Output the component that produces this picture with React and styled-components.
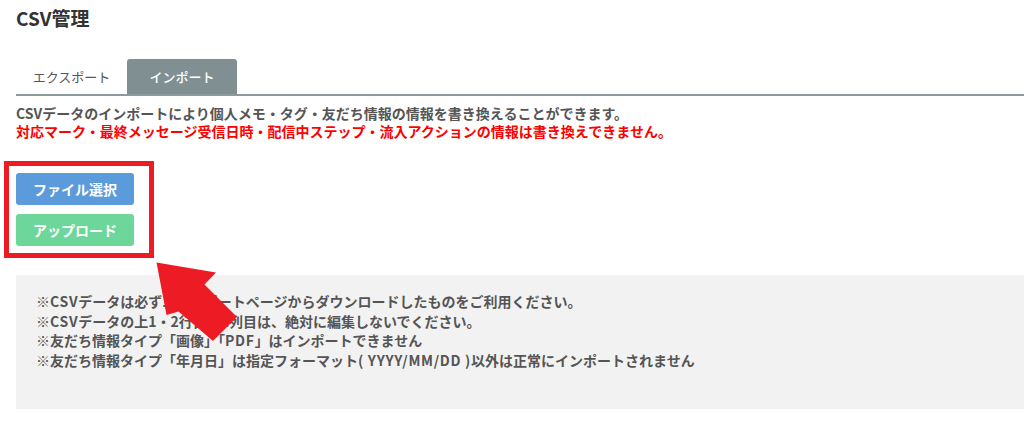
import React from "react";
import styled, { createGlobalStyle } from "styled-components";

const Global = createGlobalStyle`
  html, body { margin: 0; padding: 0; background: #fff; }
  body {
    font-family: "Noto Sans CJK JP", "Noto Sans", sans-serif;
    width: 1024px;
    height: 427px;
    overflow: hidden;
  }
`;

const Page = styled.div`
  position: relative;
  padding: 7px 0 0 16px;
`;

const Title = styled.h1`
  margin: 0;
  font-size: 19px;
  line-height: 22px;
  font-weight: 700;
  color: #333;
`;

const Tabs = styled.div`
  display: flex;
  margin-top: 30px;
  border-bottom: 2px solid #8a9a9d;
`;

const Tab = styled.div`
  width: ${(p) => p.$w}px;
  height: 35px;
  display: flex;
  align-items: center;
  justify-content: center;
  font-size: 13px;
  font-weight: ${(p) => (p.$active ? 500 : 400)};
  color: ${(p) => (p.$active ? "#fff" : "#555")};
  background: ${(p) => (p.$active ? "#7f8f92" : "transparent")};
  border-radius: 3px 3px 0 0;
`;

const Desc = styled.div`
  padding-top: 9px;
  font-size: 14px;
  line-height: 17.5px;
  font-weight: 700;
  white-space: nowrap;
`;

const DescLine = styled.div`
  color: ${(p) => (p.$red ? "#ff0000" : "#555")};
`;

const Highlight = styled.div`
  margin: 21px 0 0 -12px;
  width: 133px;
  border: 5px solid #ed1c24;
  padding: 7px 0 7px 7px;
  display: flex;
  flex-direction: column;
  gap: 9px;
`;

const Button = styled.div`
  width: 118px;
  height: 32px;
  border-radius: 3px;
  background: ${(p) => p.$bg};
  color: #fff;
  font-size: 14px;
  font-weight: 700;
  display: flex;
  align-items: center;
  justify-content: center;
`;

const Notes = styled.div`
  margin-top: 17px;
  height: 134px;
  box-sizing: border-box;
  background: #f2f2f2;
  padding: 17px 20px 0 20px;
  font-size: 14px;
  line-height: 19.5px;
  font-weight: 700;
  color: #555;
  white-space: nowrap;
`;

const Latin = styled.span`
  letter-spacing: 0.7px;
`;

const Arrow = styled.svg`
  position: absolute;
  left: 0;
  top: 0;
  pointer-events: none;
`;

export default function App() {
  return (
    <>
      <Global />
      <Page>
        <Title>CSV管理</Title>
        <Tabs>
          <Tab $w={111}>エクスポート</Tab>
          <Tab $w={110} $active>インポート</Tab>
        </Tabs>
        <Desc>
          <DescLine>CSVデータのインポートにより個人メモ・タグ・友だち情報の情報を書き換えることができます。</DescLine>
          <DescLine $red>対応マーク・最終メッセージ受信日時・配信中ステップ・流入アクションの情報は書き換えできません。</DescLine>
        </Desc>
        <Highlight>
          <Button $bg="#5b9bdc">ファイル選択</Button>
          <Button $bg="#6dd79b">アップロード</Button>
        </Highlight>
        <Notes>
          <div>※<Latin>CSV</Latin>データは必ずエクスポートページからダウンロードしたものをご利用ください。</div>
          <div>※<Latin>CSV</Latin>データの上1・2行目と1列目は、絶対に編集しないでください。</div>
          <div>※友だち情報タイプ「画像」「<Latin>PDF</Latin>」はインポートできません</div>
          <div>※友だち情報タイプ「年月日」は指定フォーマット<Latin>( YYYY/MM/DD )</Latin>以外は正常にインポートされません</div>
        </Notes>
        <Arrow width="1024" height="427" viewBox="0 0 1024 427">
          <polygon
            points="156.5,262.5 216,272.5 204.5,284.5 237,317 213,341 178.5,311.5 166.5,315"
            fill="#ed1c24"
          />
        </Arrow>
      </Page>
    </>
  );
}
